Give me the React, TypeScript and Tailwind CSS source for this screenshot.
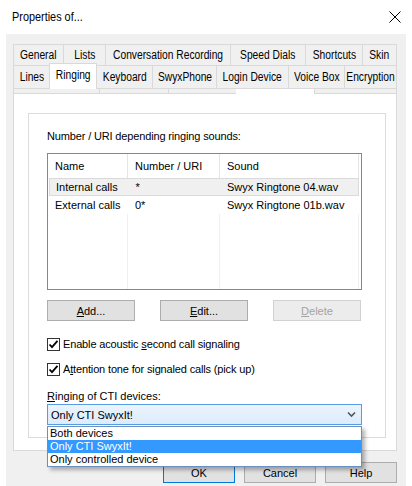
import React from "react";

const ui = { fontFamily: '"Liberation Sans", Arial, sans-serif' };

type Tab = { label: string; w: number };

const row1: Tab[] = [
  { label: "General", w: 50 },
  { label: "Lists", w: 42 },
  { label: "Conversation Recording", w: 125 },
  { label: "Speed Dials", w: 75 },
  { label: "Shortcuts", w: 57 },
  { label: "Skin", w: 35 },
];

const row2: Tab[] = [
  { label: "Lines", w: 36 },
  { label: "Ringing", w: 48 },
  { label: "Keyboard", w: 55 },
  { label: "SwyxPhone", w: 64 },
  { label: "Login Device", w: 72 },
  { label: "Voice Box", w: 56 },
  { label: "Encryption", w: 53 },
];

// tab captions use a condensed face, drawn by narrowing Liberation Sans
function TabText({ children }: { children: React.ReactNode }) {
  return (
    <span className="inline-block whitespace-nowrap text-[12.5px] leading-[14px] text-black scale-x-[0.82] origin-center">
      {children}
    </span>
  );
}

function Check({ children }: { children: React.ReactNode }) {
  return (
    <div className="flex items-center h-[14px]">
      <div className="w-[13px] h-[13px] border border-[#333333] bg-white flex items-center justify-center">
        <svg width="11" height="11" viewBox="0 0 11 11">
          <path d="M1.5 5.5 L4 8.2 L9.5 1.8" fill="none" stroke="#000" strokeWidth="1.8" />
        </svg>
      </div>
      <span className="ml-[3px] text-[11px] leading-[14px] tracking-[-0.15px] text-black whitespace-nowrap">{children}</span>
    </div>
  );
}

function Btn({ children, disabled, def, w }: { children: React.ReactNode; disabled?: boolean; def?: boolean; w: number }) {
  const base = "h-[21px] flex items-center justify-center text-[11px] leading-[14px]";
  const look = disabled
    ? "bg-[#ececec] border border-[#d2d2d2] text-[#a3a3a3]"
    : def
    ? "bg-[#e1e1e1] border border-[#0078d7] text-black"
    : "bg-[#e1e1e1] border border-[#adadad] text-black";
  return (
    <div className={`${base} ${look}`} style={{ width: w }}>
      {children}
    </div>
  );
}

export default function App() {
  return (
    <div className="w-[412px] h-[486px] bg-white flex flex-col overflow-hidden" style={ui}>
      {/* title bar */}
      <div className="h-[34px] flex items-center justify-between pl-[12px] pr-[11px] shrink-0">
        <span className="inline-block whitespace-nowrap text-[12.5px] leading-[16px] text-black scale-x-[0.87] origin-left">
          Properties of...
        </span>
        <svg width="12" height="12" viewBox="0 0 12 12">
          <path d="M0.5 0.5 L11.5 11.5 M11.5 0.5 L0.5 11.5" stroke="#000" strokeWidth="1" />
        </svg>
      </div>

      {/* dialog body */}
      <div className="flex-1 mx-[6px] bg-[#f0f0f0] flex flex-col pl-[7px] pt-[10px]">
        {/* tab rows */}
        <div className="flex h-[21px]">
          {row1.map((t, i) => (
            <div
              key={t.label}
              className={`h-[21px] flex items-center justify-center border-t border-l border-[#d9d9d9] ${
                i === row1.length - 1 ? "border-r" : ""
              }`}
              style={{ width: t.w }}
            >
              <TabText>{t.label}</TabText>
            </div>
          ))}
        </div>
        <div className="flex items-start h-[23px]">
          {row2.map((t, i) =>
            t.label === "Ringing" ? (
              <div
                key={t.label}
                className="relative z-10 -mt-[2px] h-[26px] pb-[4px] flex items-center justify-center bg-white border-t border-l border-r border-[#d9d9d9]"
                style={{ width: t.w }}
              >
                <TabText>{t.label}</TabText>
              </div>
            ) : (
              <div
                key={t.label}
                className={`h-[23px] flex items-center justify-center border-t border-l border-[#d9d9d9] ${
                  i === row2.length - 1 ? "border-r" : ""
                } ${i === 2 ? "border-l-0" : ""}`}
                style={{ width: t.w }}
              >
                <TabText>{t.label}</TabText>
              </div>
            )
          )}
        </div>

        {/* tab page */}
        <div className="w-[384px] h-[363px] bg-white border border-[#d9d9d9] flex flex-col shrink-0">
          <div className="flex h-[5px] shrink-0">
            <div className="w-[86px] bg-[#f0f0f0] border-b border-r border-[#d9d9d9]" />
            <div className="w-[69px] bg-[#f0f0f0] border-b border-r border-[#d9d9d9]" />
            <div className="w-[67px] bg-[#f0f0f0] border-b border-[#d9d9d9]" />
            <div className="w-[78px] bg-white" />
            <div className="flex-1 bg-[#f0f0f0] border-b border-l border-[#d9d9d9]" />
          </div>

          {/* group box */}
          <div className="ml-[14px] mt-[19px] w-[358px] h-[325px] border border-[#dcdcdc] bg-white pl-[18px] flex flex-col">
            <div className="mt-[15px] text-[11px] leading-[14px] tracking-[-0.15px] text-black">Number / URI depending ringing sounds:</div>

            {/* list view */}
            <div className="mt-[10px] w-[315px] h-[137px] border border-[#828790] bg-white relative text-[11px] leading-[14px] text-black">
              <div className="flex h-[24px] items-center">
                <div className="w-[80px] h-full flex items-center pl-[7px] border-r border-[#e5e5e5]">Name</div>
                <div className="w-[92px] h-full flex items-center pl-[7px] border-r border-[#e5e5e5]">Number / URI</div>
                <div className="w-[139px] h-full flex items-center pl-[7px] border-r border-[#e5e5e5]">Sound</div>
              </div>
              <div className="flex h-[18px] items-center bg-[#f0f0f0] border border-[#dadada] mx-[1px] w-[310px]">
                <div className="w-[79px] pl-[6px]">Internal calls</div>
                <div className="w-[92px] pl-[7px]">*</div>
                <div className="w-[139px] pl-[7px]">Swyx Ringtone 04.wav</div>
              </div>
              <div className="flex h-[18px] items-center">
                <div className="w-[80px] pl-[7px]">External calls</div>
                <div className="w-[92px] pl-[7px]">0*</div>
                <div className="w-[139px] pl-[7px]">Swyx Ringtone 01b.wav</div>
              </div>
              <div className="flex h-[75px]">
                <div className="w-[80px] border-r border-[#f0f0f0]" />
                <div className="w-[92px] border-r border-[#f0f0f0]" />
                <div className="w-[139px] border-r border-[#f0f0f0]" />
              </div>
            </div>

            {/* list buttons */}
            <div className="mt-[10px] w-[314px] flex justify-between">
              <Btn w={88}>
                <span>
                  <span className="underline">A</span>dd...
                </span>
              </Btn>
              <Btn w={88}>
                <span>
                  <span className="underline">E</span>dit...
                </span>
              </Btn>
              <Btn w={88} disabled>
                <span>
                  <span className="underline">D</span>elete
                </span>
              </Btn>
            </div>

            <div className="mt-[16px]">
              <Check>
                Enable acoustic <span className="underline">s</span>econd call signaling
              </Check>
            </div>
            <div className="mt-[11px]">
              <Check>
                A<span className="underline">t</span>tention tone for signaled calls (pick up)
              </Check>
            </div>

            <div className="mt-[13px] text-[11px] leading-[14px] text-black">
              <span className="underline">R</span>inging of CTI devices:
            </div>

            {/* combo box with open list */}
            <div className="mt-[1px] relative w-[315px]">
              <div className="h-[21px] border border-[#569de5] bg-gradient-to-b from-[#ecf4fc] to-[#dcecfc] flex items-center justify-between pl-[3px] pr-[5px] text-[11px] leading-[14px] text-black">
                <span>Only CTI SwyxIt!</span>
                <svg width="9" height="7" viewBox="0 0 9 7">
                  <path d="M1 1.5 L4.5 5 L8 1.5" fill="none" stroke="#555" strokeWidth="1.6" />
                </svg>
              </div>
              <div className="absolute left-0 top-[22px] w-[315px] h-[41px] bg-white border border-[#6b8fc0] shadow-[3px_3px_4px_rgba(0,0,0,0.3)] z-20 flex flex-col text-[11px] leading-[13px] text-black">
                <div className="h-[13px] pl-[2px]">Both devices</div>
                <div className="h-[13px] pl-[2px] bg-[#3399ff] text-white">Only CTI SwyxIt!</div>
                <div className="h-[13px] pl-[2px]">Only controlled device</div>
              </div>
            </div>
          </div>
        </div>

        {/* dialog buttons */}
        <div className="mt-[11px] w-[384px] flex justify-end gap-[9px]">
          <Btn w={72} def>
            OK
          </Btn>
          <Btn w={72}>Cancel</Btn>
          <Btn w={72}>Help</Btn>
        </div>
      </div>
    </div>
  );
}
